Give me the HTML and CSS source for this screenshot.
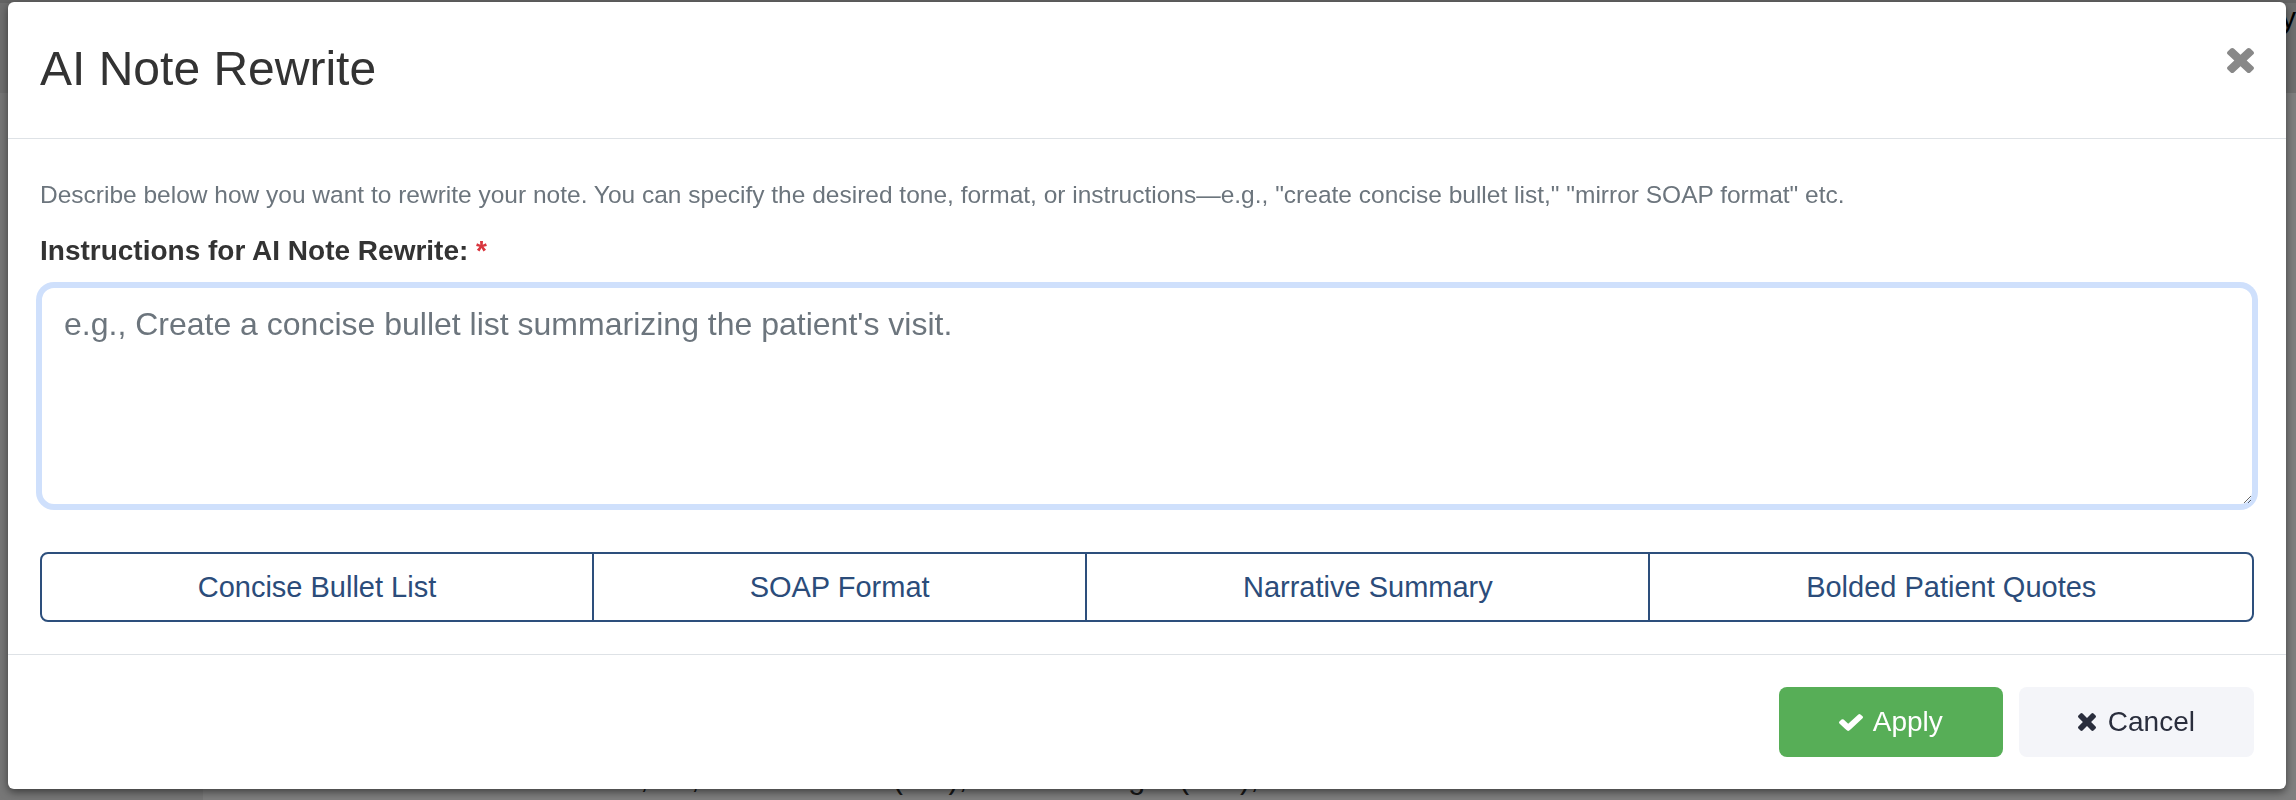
FILE: index.html
```html
<!DOCTYPE html>
<html lang="en">
<head>
<meta charset="utf-8">
<title>AI Note Rewrite</title>
<link rel="stylesheet" href="styles.css">
</head>
<body>
  <div class="page">
    <header class="page-top"><span class="page-top-text">y</span></header>
    <div class="page-row">
      <aside class="page-side"></aside>
      <main class="page-main">
        <p class="page-text">Pain/tenderness noted at: C2, L4, sacroiliac left (SIL), sacroiliac right (SIR), S2.</p>
      </main>
    </div>
  </div>

  <div class="backdrop"></div>

  <div class="modal" role="dialog" aria-labelledby="modal-title">
    <div class="modal-header">
      <h2 class="modal-title" id="modal-title">AI Note Rewrite</h2>
      <button class="modal-close" type="button" aria-label="Close">
        <svg class="icon-close" viewBox="110 366 1188 1188" preserveAspectRatio="none"><path d="M1298 1322q0 40-28 68l-136 136q-28 28-68 28t-68-28l-294-294-294 294q-28 28-68 28t-68-28l-136-136q-28-28-28-68t28-68l294-294-294-294q-28-28-28-68t28-68l136-136q28-28 68-28t68 28l294 294 294-294q28-28 68-28t68 28l136 136q28 28 28 68t-28 68l-294 294 294 294q28 28 28 68z"/></svg>
      </button>
    </div>

    <div class="modal-body">
      <p class="help-text">Describe below how you want to rewrite your note. You can specify the desired tone, format, or instructions—e.g., "create concise bullet list," "mirror SOAP format" etc.</p>
      <label class="field-label" for="instructions">Instructions for AI Note Rewrite: <span class="required">*</span></label>
      <textarea class="field-input is-focused" id="instructions" placeholder="e.g., Create a concise bullet list summarizing the patient's visit."></textarea>

      <div class="preset-group">
        <button class="preset" type="button">Concise Bullet List</button>
        <button class="preset" type="button">SOAP Format</button>
        <button class="preset" type="button">Narrative Summary</button>
        <button class="preset" type="button">Bolded Patient Quotes</button>
      </div>
    </div>

    <div class="modal-footer">
      <button class="btn btn-apply" type="button">
        <svg class="icon-check" viewBox="121 334 1550 1188" preserveAspectRatio="none"><path d="M1671 566q0 40-28 68l-724 724-136 136q-28 28-68 28t-68-28l-136-136-362-362q-28-28-28-68t28-68l136-136q28-28 68-28t68 28l294 295 656-657q28-28 68-28t68 28l136 136q28 28 28 68z"/></svg>
        <span>Apply</span>
      </button>
      <button class="btn btn-cancel" type="button">
        <svg class="icon-times" viewBox="110 366 1188 1188" preserveAspectRatio="none"><path d="M1298 1322q0 40-28 68l-136 136q-28 28-68 28t-68-28l-294-294-294 294q-28 28-68 28t-68-28l-136-136q-28-28-28-68t28-68l294-294-294-294q-28-28-28-68t28-68l136-136q28-28 68-28t68 28l294 294 294-294q28-28 68-28t68 28l136 136q28 28 28 68t-28 68l-294 294 294 294q28 28 28 68z"/></svg>
        <span>Cancel</span>
      </button>
    </div>
  </div>
</body>
</html>
```

FILE: styles.css
```css
* {
  box-sizing: border-box;
}

html, body {
  margin: 0;
  padding: 0;
  height: 100%;
  overflow: hidden;
}

body {
  font-family: "Liberation Sans", Arial, Helvetica, sans-serif;
  background: #ffffff;
  color: #333333;
}

/* ---------- page behind the dialog ---------- */
.page {
  height: 800px;
  display: flex;
  flex-direction: column;
}

.page-top {
  height: 103px;
  background: #dedede;
  border-top: 3px solid #c8c8c8;
  display: flex;
  justify-content: flex-end;
}

.page-top-text {
  font-size: 30px;
  color: #000;
  line-height: 30px;
}

.page-row {
  flex: 1;
  display: flex;
}

.page-side {
  width: 203px;
  background: #eeeeee;
}

.page-main {
  flex: 1;
  padding: 662px 0 0 42px;
}

.page-text {
  margin: 0;
  font-size: 30.5px;
  line-height: 45px;
  color: #333333;
  white-space: nowrap;
}

.backdrop {
  position: fixed;
  inset: 0;
  background: rgba(0, 0, 0, 0.5);
}

/* ---------- dialog ---------- */
.modal {
  position: absolute;
  left: 8px;
  top: 2px;
  width: 2278px;
  background: #ffffff;
  border-radius: 6px;
  box-shadow: 0 3px 9px rgba(0, 0, 0, 0.5);
}

.modal-header {
  display: flex;
  justify-content: space-between;
  align-items: flex-start;
  padding: 31px 32px 33px;
  border-bottom: 1px solid #dee2e6;
}

.modal-title {
  margin: 0;
  font-size: 48px;
  font-weight: 400;
  line-height: 72px;
  color: #333333;
}

.modal-close {
  margin-top: 15px;
  padding: 0;
  border: 0;
  background: transparent;
  line-height: 0;
  cursor: pointer;
}

.icon-close {
  width: 27px;
  height: 25px;
  fill: #888888;
}

.modal-body {
  display: flex;
  flex-direction: column;
  padding: 32px;
}

.help-text {
  margin: 6px 0 17px;
  font-size: 24.5px;
  line-height: 36px;
  color: #6c757d;
}

.field-label {
  margin: 0 0 14px;
  font-size: 28px;
  line-height: 42px;
  font-weight: 700;
  color: #333333;
}

.required {
  color: #d9363e;
}

.field-input {
  display: block;
  width: 100%;
  height: 220px;
  padding: 12px 22px;
  font-family: inherit;
  font-size: 32px;
  line-height: 48px;
  color: #495057;
  background: #ffffff;
  border: 2px solid #cfe0fc;
  border-radius: 14px;
  resize: vertical;
  outline: none;
}

.field-input.is-focused {
  box-shadow: 0 0 0 4px #cfe0fc;
}

.field-input::placeholder {
  color: #6c757d;
  opacity: 1;
}

.preset-group {
  display: flex;
  margin-top: 46px;
}

.preset {
  flex: 1 1 auto;
  padding: 12px 24px;
  font-family: inherit;
  font-size: 29px;
  line-height: 42px;
  color: #2b4c7a;
  background: #ffffff;
  border: 2px solid #2d4f7c;
  border-radius: 0;
  cursor: pointer;
}

.preset + .preset {
  margin-left: -2px;
}

.preset:first-child {
  border-radius: 8px 0 0 8px;
}

.preset:last-child {
  border-radius: 0 8px 8px 0;
}

.modal-footer {
  display: flex;
  justify-content: flex-end;
  gap: 16px;
  padding: 32px;
  border-top: 1px solid #dee2e6;
}

.btn {
  display: inline-flex;
  align-items: center;
  gap: 10px;
  padding: 14px 60px;
  font-family: inherit;
  font-size: 28px;
  line-height: 42px;
  border: 0;
  border-radius: 8px;
  cursor: pointer;
}

.btn-apply {
  background: #57ae57;
  color: #ffffff;
}

.btn-cancel {
  background: #f4f5f9;
  color: #2a2e3d;
  gap: 12px;
  padding-left: 59px;
  padding-right: 59px;
}

.icon-check {
  width: 24px;
  height: 17px;
  fill: #ffffff;
}

.icon-times {
  width: 18px;
  height: 18px;
  fill: #2a2e3d;
}
```
